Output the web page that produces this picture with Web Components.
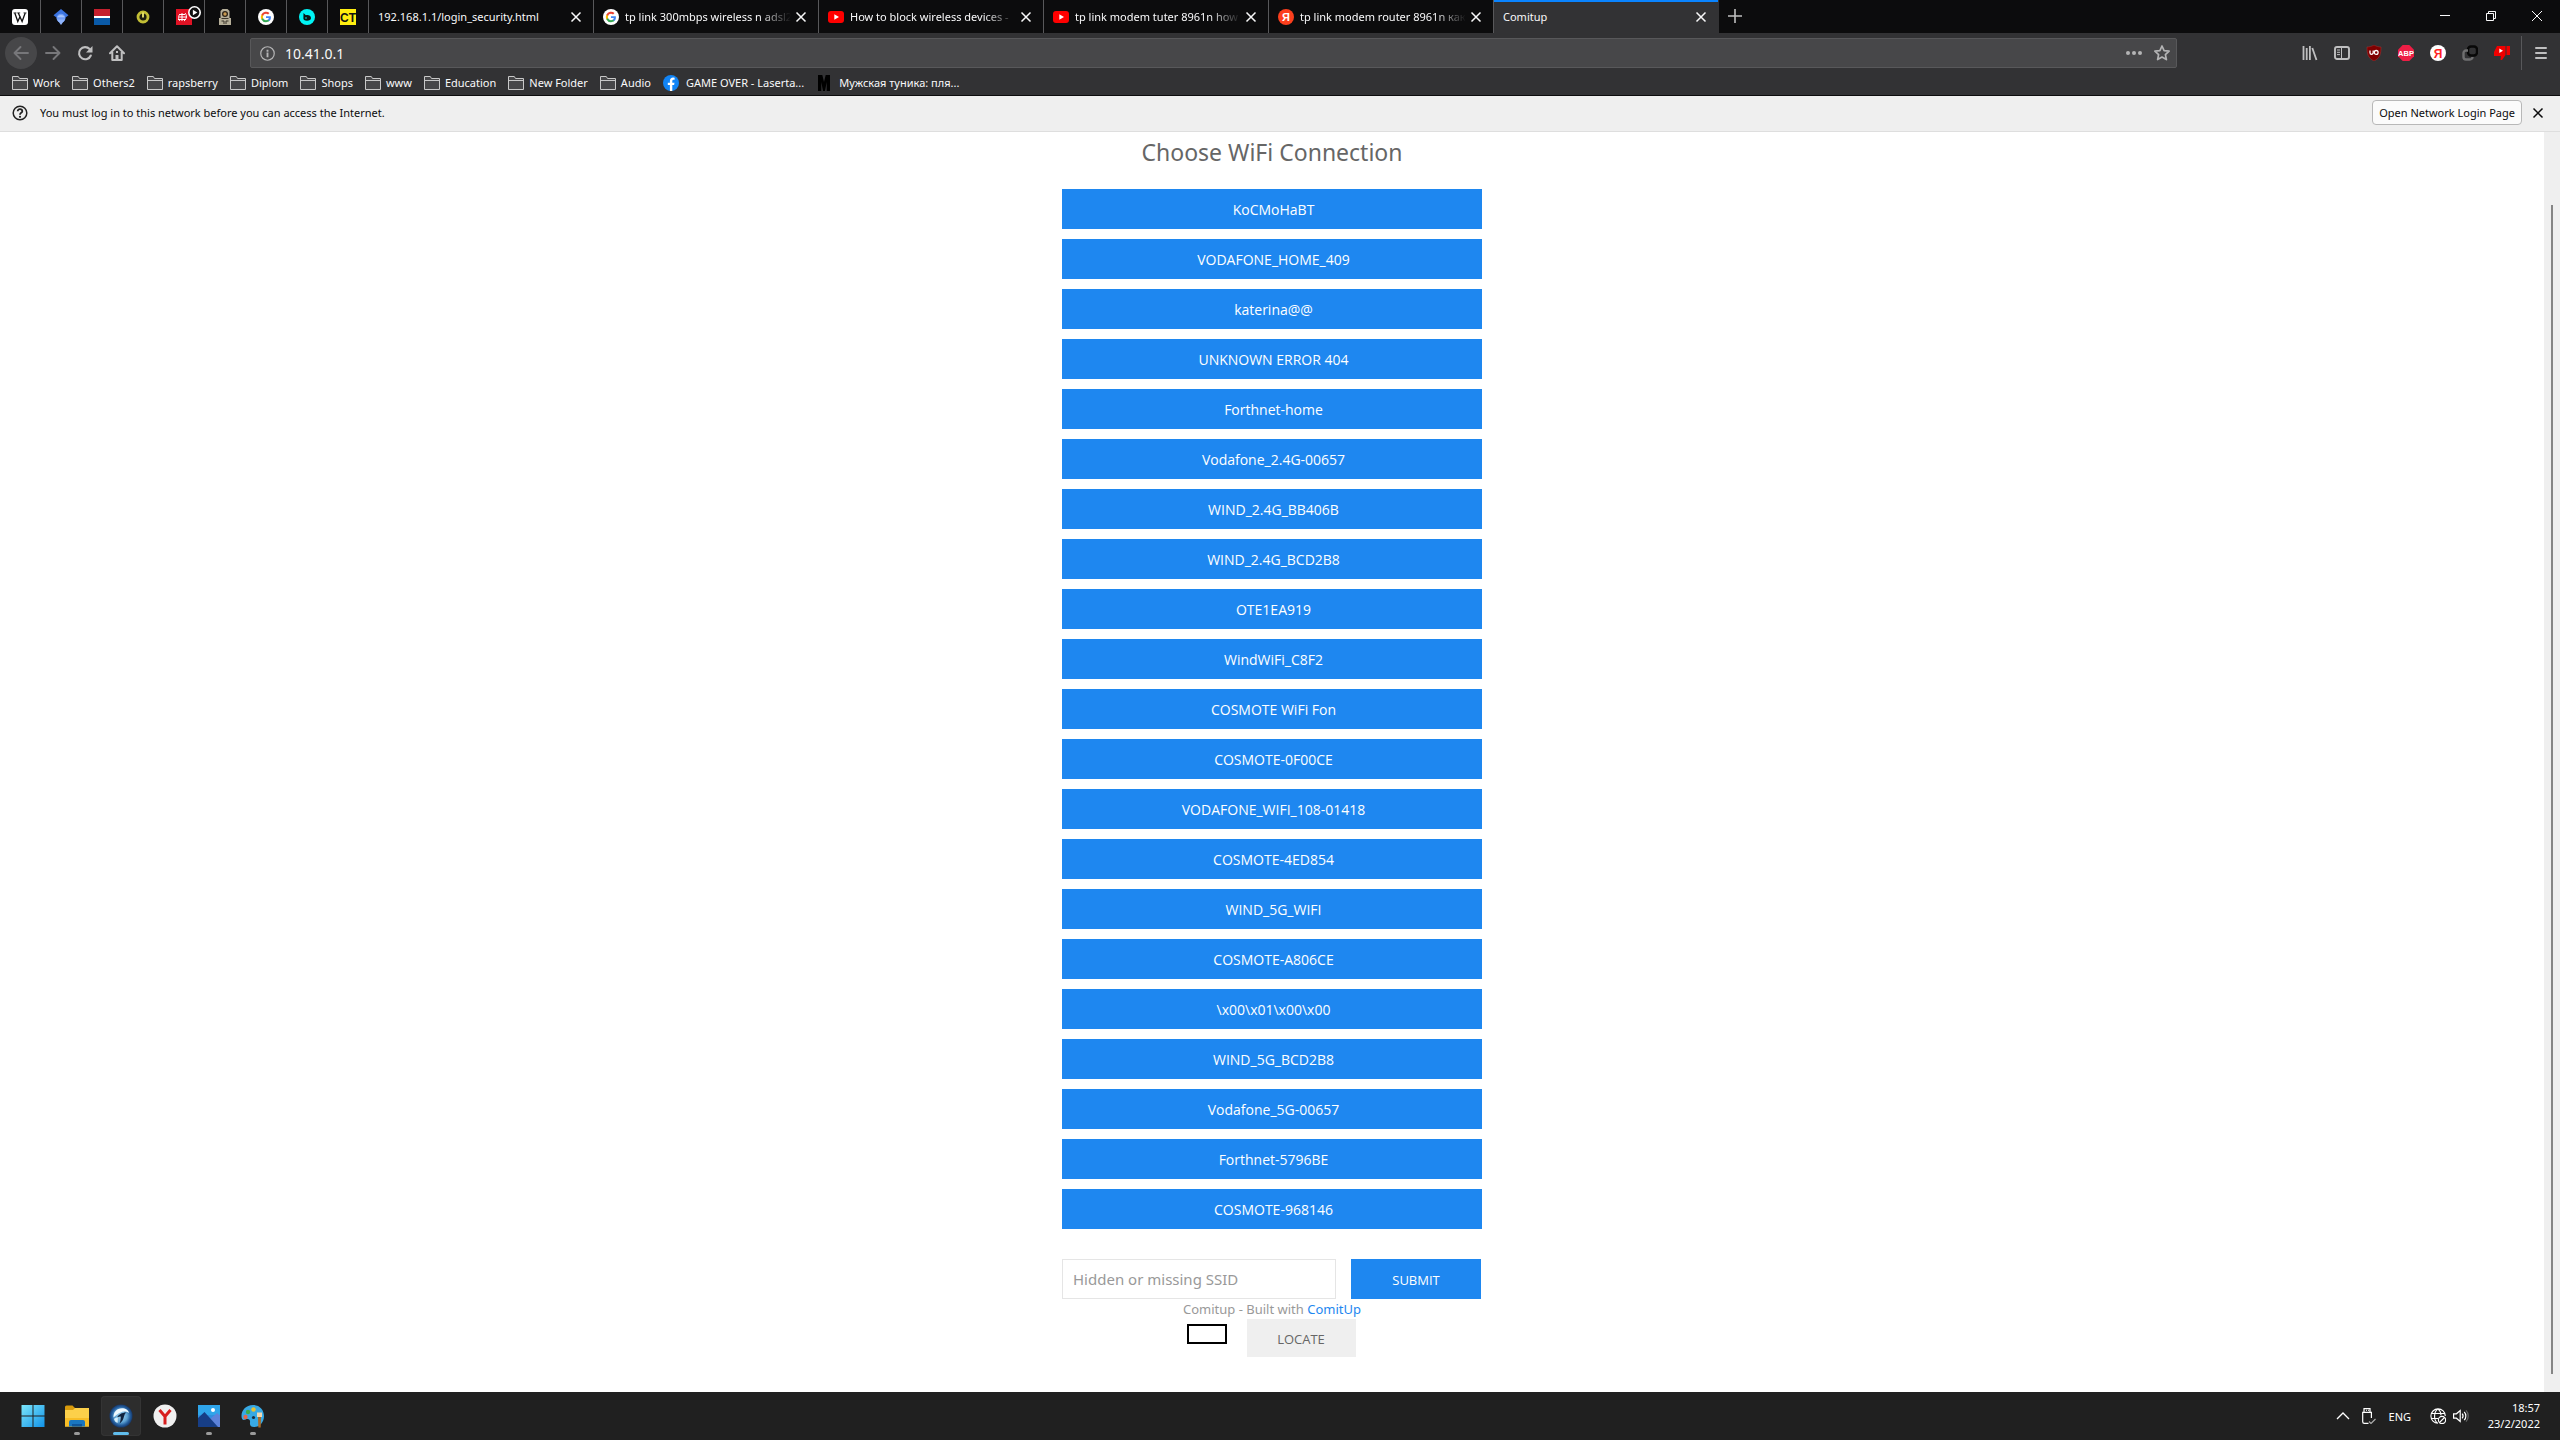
<!DOCTYPE html>
<html lang="en">
<head>
<meta charset="utf-8">
<title>Comitup</title>
<style>
  html, body { margin: 0; height: 100%; }
  body { font-family: "Noto Sans", "Open Sans", sans-serif; font-size: 12px; background: #fff; }
</style>
</head>
<body>
<desktop-screen></desktop-screen>
<script>
const G = '<path fill="#4285f4" d="M12.900 8.200c0-.4 0-.7-.1-1H8v1.900h2.800c-.1.7-.5 1.200-1 1.600v1.300h1.600c1-.9 1.500-2.200 1.500-3.800z"/><path fill="#34a853" d="M8 13.200c1.400 0 2.500-.5 3.400-1.200l-1.600-1.300c-.5.3-1.100.5-1.800.5-1.400 0-2.500-.9-2.900-2.200H3.400v1.400A5.200 5.200 0 0 0 8 13.200z"/><path fill="#fbbc05" d="M5.100 9a3 3 0 0 1 0-2V5.600H3.400a5.200 5.200 0 0 0 0 4.800z"/><path fill="#ea4335" d="M8 4.800c.8 0 1.500.3 2 .8l1.500-1.500A5.200 5.200 0 0 0 3.400 5.600L5.100 7C5.500 5.700 6.600 4.800 8 4.800z"/>';
const ICONS = {
  wiki: '<rect width="16" height="16" rx="3" fill="#fff"/><path fill="none" stroke="#111" stroke-width="1.300" d="M2.800 4l3 8.500L8.300 7M6.300 4l3.800 8.500L13.200 4"/><path stroke="#111" stroke-width=".8" d="M1.500 3.900h3M5.200 3.900h3M11.500 3.900h3"/>',
  scholar: '<path fill="#3b74e0" d="M8 0L.5 6.300 4 9h8l3.500-2.700z"/><circle cx="8" cy="9.200" r="4.400" fill="#6f9df5"/><path fill="#8fb4fc" d="M4 10.500h8L8 16z"/><path fill="#a6c4fd" d="M4.200 8.200a4.400 4.400 0 0 1 7.600 0z"/>',
  flag: '<path fill="#c5202e" d="M0 0h16v7H0z"/><path fill="#fff" d="M0 7h16v2H0z"/><path fill="#0a5aa8" d="M0 9h16v7H0z"/>',
  power: '<circle cx="8" cy="8" r="5" fill="#1c1c10" stroke="#c2be35" stroke-width="2.800"/><path stroke="#f0ec70" stroke-width="1.800" d="M8 3.500v5"/>',
  redtv: '<path fill="#e01224" d="M0 0h16v16H0z"/><path fill="none" stroke="#fff" stroke-width="1" d="M3 5.500h6M3 8h8M2 10.500h8M6 4v8M4 5c-2 2-2 5 0 7M9 4c2 2 2 6-1 8"/>',
  play: '<circle cx="8" cy="8" r="7" fill="#111" stroke="#fff" stroke-width="2"/><path fill="#fff" d="M6 4.500L11.500 8 6 11.500z"/>',
  robot: '<path fill="#b5ae98" d="M3.500 2L5.500 0h5l2 2v7H14v7H2V9h1.500z"/><circle cx="8" cy="5" r="3" fill="#2c2418"/><circle cx="8" cy="5" r="1.700" fill="#c99a50"/><path stroke="#3a352b" d="M4.500 9.500h7M4.500 12h2.500v3M11.500 12H9v3" fill="none"/>',
  google: '<circle cx="8" cy="8" r="8" fill="#fff"/>' + G,
  cyan: '<circle cx="8" cy="8" r="8" fill="#00f4f4"/><path fill="#0a1616" d="M4.500 4l2.400 2.300C9.500 5.500 12 7 12 9c0 1.800-1.500 2.800-4 2.800S4 10.800 4.400 8.800z"/><circle cx="7" cy="9" r=".8" fill="#00f4f4"/>',
  ct: '<path fill="#ffee10" d="M0 0h16v16H0z"/><text x="8" y="12.500" text-anchor="middle" font-family="Liberation Sans" font-weight="700" font-size="12" fill="#111">CT</text>',
  youtube: '<rect y="2" width="16" height="12" rx="3" fill="#f00"/><path fill="#fff" d="M6.300 5.300L11 8l-4.700 2.700z"/>',
  yandex: '<circle cx="8" cy="8" r="8" fill="#fc3f1d"/><text x="8" y="12" text-anchor="middle" font-family="Liberation Sans" font-weight="700" font-size="11" fill="#fff">Я</text>',
  yaext: '<circle cx="8" cy="8" r="8" fill="#fff"/><text x="8" y="12.500" text-anchor="middle" font-family="Liberation Sans" font-weight="700" font-size="12" fill="#f22">Я</text>',
  close: '<path fill="none" stroke="currentColor" stroke-width="1.500" d="M3.500 3.500l9 9M12.500 3.500l-9 9"/>',
  plus: '<path fill="none" stroke="currentColor" stroke-width="1.600" d="M8 1v14M1 8h14"/>',
  min: '<path stroke="currentColor" d="M3 7.500h10"/>',
  restore: '<path fill="none" stroke="currentColor" d="M3.500 5.500h7v7h-7zM5.500 5.500v-2h7v7h-2"/>',
  winclose: '<path fill="none" stroke="currentColor" d="M3 3l10 10M13 3L3 13"/>',
  back: '<path fill="none" stroke="currentColor" stroke-width="1.900" stroke-linecap="round" stroke-linejoin="round" d="M15 8H1.500M7.500 2l-6 6 6 6"/>',
  forward: '<path fill="none" stroke="currentColor" stroke-width="1.900" stroke-linecap="round" stroke-linejoin="round" d="M1 8h13.500M8.500 2l6 6-6 6"/>',
  reload: '<path fill="none" stroke="currentColor" stroke-width="2.100" stroke-linecap="round" d="M13.800 10.500A6.100 6.100 0 1 1 12.600 4"/><path fill="currentColor" d="M15.500 1v6.500H9z"/>',
  home: '<path fill="none" stroke="currentColor" stroke-width="2" stroke-linejoin="round" stroke-linecap="round" d="M1 8.300L8 1.300l7 7M3.300 7v8h9.400V7"/><path fill="currentColor" d="M6.500 10h3v5h-3zM7 6h2v2H7z"/>',
  info: '<circle cx="8" cy="8" r="7.200" fill="none" stroke="currentColor" stroke-width="1.300"/><path fill="currentColor" d="M7 7h2v5H7zM7 4h2v2H7z"/>',
  dots: '<g fill="currentColor"><circle cx="2" cy="8" r="2"/><circle cx="8" cy="8" r="2"/><circle cx="14" cy="8" r="2"/></g>',
  star: '<path fill="none" stroke="currentColor" stroke-width="1.700" stroke-linejoin="round" d="M8 1l2.100 4.600 5 .6-3.700 3.400 1 5L8 12.100l-4.400 2.500 1-5L.9 6.200l5-.6z"/>',
  library: '<path fill="none" stroke="currentColor" stroke-width="1.800" d="M1.500 1v14M4.700 3v12M7.900 1v14M10.300 3l4.200 12"/>',
  sidebar: '<rect x="1" y="2" width="14" height="12" rx="2" fill="none" stroke="currentColor" stroke-width="1.900"/><path stroke="currentColor" stroke-width="1" d="M7.500 2v12M3 5h3M3 7.300h3M3 9.600h3"/>',
  ublock: '<path fill="#800000" stroke="#a33" stroke-width=".5" d="M8 0c2.500 1.500 5 2 7 2 0 7-1 11-7 14C2 13 1 9 1 2c2 0 4.500-.5 7-2z"/><path fill="none" stroke="#fff" stroke-width="1.300" d="M4 5.500v2.200a1.600 1.600 0 0 0 3.200 0V5.500"/><circle cx="10.200" cy="7.400" r="1.900" fill="none" stroke="#fff" stroke-width="1.300"/>',
  abp: '<path fill="#ed1e45" d="M4.700 0h6.600L16 4.700v6.600L11.300 16H4.700L0 11.300V4.700z"/><text x="8" y="10.700" text-anchor="middle" font-family="Liberation Sans" font-weight="700" font-size="7.500" fill="#fff">ABP</text>',
  links: '<rect x="6" y="1.500" width="9" height="9" rx="3" fill="none" stroke="#080808" stroke-width="2.400"/><path fill="none" stroke="#6f6f70" stroke-width="2.400" d="M6 5.500H4a2.500 2.500 0 0 0-2.500 2.500v4A2.500 2.500 0 0 0 4 14.500h4a2.500 2.500 0 0 0 2.500-2.500"/>',
  dislike: '<path fill="#f00000" d="M3 1h8.500v9L8 15H6.500l.4-4H0V7zM12.500 1H16v9h-3.500z"/><path fill="#fff" d="M5.300 3.500L9 5.700 5.300 8z"/>',
  menu: '<path stroke="currentColor" stroke-width="2" stroke-linecap="round" d="M3 3h10M3 8h10M3 13h10"/>',
  folder: '<path fill="#474749" stroke="#c8c8c8" d="M.5 14V1.500h5.800l1.200 2h8V14.500H.5zM.5 5.500h15"/>',
  facebook: '<circle cx="8" cy="8" r="8" fill="#1184f5"/><path fill="#fff" d="M6.900 16V10H4.800V7.700h2.100V6c0-2.200 1.200-3.400 3.200-3.400l1.500.1v2h-1c-1 0-1.300.6-1.300 1.300v1.700h2.200L11.100 10H9.300v6z"/>',
  m: '<path fill="#000" d="M2 0h4.300L8 7l1.700-7H14v16h-3.300V7L9 16H7L5.300 7v9H2z"/>',
  help: '<circle cx="8" cy="8" r="6.800" fill="none" stroke="#222" stroke-width="1.500"/><path fill="none" stroke="#222" stroke-width="1.800" d="M5.700 6.300C5.700 3.300 10.300 3.500 10.300 6.200 10.300 8 8 7.600 8 9.700"/><circle cx="8" cy="11.800" r="1.100" fill="#222"/>',
  start: '<defs><linearGradient id="w" x2="1" y2="1"><stop stop-color="#7ce7fb"/><stop offset="1" stop-color="#1192e8"/></linearGradient></defs><path fill="url(#w)" d="M.5 1h11v10.500H.5zM12.500 1h11v10.500h-11zM.5 12.500h11V23H.5zM12.500 12.500h11V23h-11z"/>',
  explorer: '<path fill="#d99b0c" d="M0 3a1.500 1.500 0 0 1 1.500-1.500h6L10 4v4H0z"/><path fill="#fcd04a" d="M0 6h8l2-2h14v18.500H0z"/><path fill="#f7bd26" d="M0 14h24v8.500H0z"/><path fill="#1976c0" d="M4 22.500V18a2 2 0 0 1 2-2h12a2 2 0 0 1 2 2v4.500z"/><path fill="#0f569b" d="M7 20h10v2.500H7z"/>',
  waterfox: '<defs><radialGradient id="f" cx=".5" cy=".5" r=".5"><stop stop-color="#a9daf4"/><stop offset=".55" stop-color="#5fa3d4"/><stop offset=".8" stop-color="#255f9e"/><stop offset="1" stop-color="#15386c"/></radialGradient></defs><circle cx="12" cy="12" r="11.500" fill="url(#f)"/><path fill="#eef9ff" d="M4.500 13.500C4 7.500 9 3 15.500 4.500c2.500.6 4 2.300 4.500 4.500-3-2-6-1.800-8.500-.5-3 1.300-4.500 3-7 5z"/><path fill="#10233f" d="M8 13.500c1.500-2.700 4.500-5 9.500-5-2.500 1.500-2 4-3.500 7-.8 1.600-2 3-3.500 4 1-2.500 1.300-4.500 1.200-7-1.200 0-2.400.3-3.700 1z"/><path fill="#d5effc" d="M5 15c1-1 2.500-1.500 4-1.500-.5 2 0 3.500-.5 5.500C6.500 18 5.500 17 5 15z"/>',
  yabrowser: '<circle cx="12" cy="12" r="11.500" fill="#f0f0f0"/><path fill="none" stroke="#d81f1f" stroke-width="3" d="M6.500 6L12 12.500 17.500 6M12 12v8.500"/>',
  photos: '<path fill="#2f8fe0" d="M1 1h22v22H1z"/><path fill="#2fa5ea" d="M1 1h22v10H1z"/><path fill="#5d83da" d="M13 15l7-6 3 2.500V23H13z"/><path fill="#173e86" d="M1 14l6.500-6L21 23H1z"/><circle cx="16" cy="6" r="2" fill="#fff"/>',
  paint: '<path fill="#38a9e4" d="M12 1C5 1 .5 6 .5 12c0 4 2 4.500 4 3.500 3-1.300 5 0 4.500 3-.4 3 1 4.500 4 4.500 6 0 10-5 10-11S18.500 1 12 1z"/><circle cx="4.500" cy="13" r="2.200" fill="#e2694b"/><circle cx="7" cy="8" r="2.200" fill="#40ad4c"/><circle cx="12.500" cy="5.500" r="2.200" fill="#e6c335"/><circle cx="12.500" cy="13.500" r="1.600" fill="#1c2c3c"/><path fill="#f1d9b3" d="M16 8.500h5V13h-5z"/><path fill="#a86a28" d="M17 13h3l-.3 10.500h-2.400z"/>',
  up: '<path fill="none" stroke="currentColor" stroke-width="1.300" d="M2 11l6-6 6 6"/>',
  usb: '<path fill="none" stroke="currentColor" stroke-width="1.200" d="M4 4V.6h6V4M8.500 15.400H4.400a1.700 1.700 0 0 1-1.700-1.700V4.300h8.700V10M6 2.300h.8M8 2.300h.8"/><path fill="none" stroke="#aaa" stroke-width="1.200" d="M9 13.500l2 2 4.500-4.500"/>',
  globe: '<g fill="none" stroke="currentColor" stroke-width="1.100"><path d="M8 15.300A7.200 7.200 0 1 1 15.300 8M.9 5.500h14.200M.9 10.500H8M8 .8C3.500 4 3.500 12 7.500 15.200M8 .8c2 1.700 3 4 3 6.500"/><circle cx="12" cy="12" r="3.600"/><path d="M9.500 14.500l5-5"/></g>',
  speaker: '<g fill="none" stroke="currentColor" stroke-width="1.200"><path d="M.6 5.800h2.800L7.200 2.500v11L3.400 10.200H.6z"/><path d="M9.200 5.700c1 1.300 1 3.300 0 4.600M11.200 3.800c2.200 2.200 2.200 6.200 0 8.400"/><path stroke="#666" d="M13 2.300c3 3 3 8.400 0 11.400"/></g>'
};

class Base extends HTMLElement {
  connectedCallback() {
    if (this.shadowRoot) return;
    this.attachShadow({ mode: 'open' }).innerHTML =
      '<style>:host{box-sizing:border-box}*{box-sizing:border-box}button,input{font:inherit;color:inherit;margin:0;padding:0;border:0;background:none}' +
      this.css() + '</style>' + this.html();
  }
  css() { return ''; }
  html() { return '<slot></slot>'; }
  a(n) { return this.getAttribute(n); }
}

/* <ui-icon name size> draws one glyph of the ICONS table */
customElements.define('ui-icon', class extends Base {
  css() { return ':host{display:block;flex:none}svg{display:block}'; }
  html() {
    const big = ['start', 'explorer', 'waterfox', 'yabrowser', 'photos', 'paint'].includes(this.a('name'));
    const s = this.a('size') || (big ? 24 : 16), v = big ? 24 : 16;
    return `<svg width="${s}" height="${s}" viewBox="0 0 ${v} ${v}" aria-hidden="true">${ICONS[this.a('name')]}</svg>`;
  }
});

customElements.define('icon-button', class extends Base {
  css() {
    return `:host{display:flex;flex:none;width:32px;height:32px}
      button{flex:1;display:flex;align-items:center;justify-content:center}
      :host([round]) button{background:#474749;border-radius:50%}`;
  }
  html() { return `<button aria-label="${this.a('label')}"><ui-icon name="${this.a('name')}" size="${this.a('size') || 16}"></ui-icon></button>`; }
});

customElements.define('pinned-tab', class extends Base {
  css() {
    return `:host{display:flex;width:41px;flex:none;border-right:1px solid #58585a}
      button{flex:1;display:flex;align-items:center;justify-content:center;position:relative}
      .badge{position:absolute;left:24px;top:6px}`;
  }
  html() {
    return `<button aria-label="${this.a('label')}"><ui-icon name="${this.a('name')}"></ui-icon>` +
      (this.hasAttribute('playing') ? '<ui-icon class="badge" name="play" size="13"></ui-icon>' : '') + '</button>';
  }
});

customElements.define('browser-tab', class extends Base {
  css() {
    return `:host{display:flex;width:225px;flex:none;border-right:1px solid #58585a;align-items:center;padding:0 7px 0 9px;color:#f9f9fa}
      :host([active]){background:#323234;border-right-color:#323234;box-shadow:inset 0 2px #0a84ff}
      .pick{flex:1;min-width:0;display:flex;align-items:center;gap:6px;text-align:left}
      .label{flex:1;overflow:hidden;white-space:nowrap;line-height:18px}
      :host([fade]) .label{-webkit-mask-image:linear-gradient(to left,transparent,#000 32px);mask-image:linear-gradient(to left,transparent,#000 32px)}
      icon-button{width:20px;height:20px}`;
  }
  html() {
    const i = this.a('icon');
    return `<button class="pick">${i ? `<ui-icon name="${i}"></ui-icon>` : ''}<span class="label"><slot></slot></span></button>
      <icon-button name="close" label="Close tab"></icon-button>`;
  }
});

customElements.define('tab-strip', class extends Base {
  css() { return `:host{display:flex;height:33px;background:#0c0c0d;color:#f9f9fa;font-size:11px}
    .new{width:32px;color:#bebebf}.grow{flex:1}.win{width:46px}`; }
  html() {
    const pins = ['wiki', 'scholar', 'flag', 'power', 'redtv', 'robot', 'google', 'cyan', 'ct'];
    return pins.map(p => `<pinned-tab name="${p}" label="${p}" ${p === 'redtv' ? 'playing' : ''}></pinned-tab>`).join('') + `
      <browser-tab>192.168.1.1/login_security.html</browser-tab>
      <browser-tab icon="google" fade>tp link 300mbps wireless n adsl2</browser-tab>
      <browser-tab icon="youtube" fade>How to block wireless devices -</browser-tab>
      <browser-tab icon="youtube" fade>tp link modem tuter 8961n how</browser-tab>
      <browser-tab icon="yandex" fade>tp link modem router 8961n как</browser-tab>
      <browser-tab active>Comitup</browser-tab>
      <icon-button class="new" name="plus" label="New tab"></icon-button>
      <span class="grow"></span>
      <icon-button class="win" name="min" label="Minimize"></icon-button>
      <icon-button class="win" name="restore" label="Restore"></icon-button>
      <icon-button class="win" name="winclose" label="Close"></icon-button>`;
  }
});

customElements.define('nav-bar', class extends Base {
  css() {
    return `:host{display:flex;align-items:center;height:40px;padding:0 3px 0 5px;background:#323234;color:#bfbfc0}
      .off{color:#77777a}
      .url{flex:1;display:flex;align-items:center;height:30px;margin:0 117px;border:1px solid #58585a;border-radius:2px;background:#474749;padding:0 5px 0 9px;gap:10px;color:#b4b4b5}
      .url icon-button{width:18px;height:28px}
      input{flex:1;min-width:0;font-size:14px;color:#f9f9fa;outline:0;height:28px}
      .rule{width:1px;height:34px;background:#58585a;margin:0 3px}`;
  }
  html() {
    const ext = ['library', 'sidebar', 'ublock', 'abp', 'yaext', 'links', 'dislike'];
    return `<icon-button class="off" round name="back" label="Back"></icon-button>
      <icon-button class="off" name="forward" label="Forward"></icon-button>
      <icon-button name="reload" label="Reload"></icon-button>
      <icon-button name="home" label="Home"></icon-button>
      <div class="url"><ui-icon name="info" size="15"></ui-icon><input aria-label="Address" value="10.41.0.1">
        <icon-button name="dots" label="Page actions"></icon-button><icon-button name="star" label="Bookmark"></icon-button></div>` +
      ext.map(e => `<icon-button name="${e}" label="${e}"></icon-button>`).join('') +
      `<span class="rule"></span><icon-button name="menu" label="Menu"></icon-button>`;
  }
});

customElements.define('bookmark-item', class extends Base {
  css() { return `:host{display:block;flex:none}a{display:flex;align-items:center;gap:5px;color:#f9f9fa;text-decoration:none;line-height:18px;white-space:nowrap}
    :host([wide]) a{gap:7px}`; }
  html() { return `<a href="#"><ui-icon name="${this.a('icon') || 'folder'}"></ui-icon><slot></slot></a>`; }
});

customElements.define('bookmark-bar', class extends Base {
  css() { return ':host{display:flex;align-items:center;gap:12px;height:23px;padding:0 12px 3px;background:#323234;border-bottom:1px solid #0c0c0d;font-size:11px}'; }
  html() {
    return ['Work', 'Others2', 'rapsberry', 'Diplom', 'Shops', 'www', 'Education', 'New Folder', 'Audio'].map(t => `<bookmark-item>${t}</bookmark-item>`).join('') +
      '<bookmark-item wide icon="facebook">GAME OVER - Laserta...</bookmark-item><bookmark-item wide icon="m">Мужская туника: пля...</bookmark-item>';
  }
});

customElements.define('notice-bar', class extends Base {
  css() {
    return `:host{display:flex;align-items:center;height:36px;padding:0 6px 2px 12px;background:#efefef;border-bottom:1px solid #dedede;color:#0c0c0d;font-size:11px}
      .msg{flex:1;padding-left:12px}
      .open{height:25px;padding:0 6px;border:1px solid #b8b8b8;border-radius:4px;background:#fbfbfb}`;
  }
  html() { return `<ui-icon name="help"></ui-icon><span class="msg"><slot></slot></span><button class="open">Open Network Login Page</button><icon-button name="close" label="Dismiss"></icon-button>`; }
});

customElements.define('wifi-button', class extends Base {
  css() {
    return `:host{display:flex;height:40px}
      button{flex:1;background:#1e87f0;color:#fff;font-family:"Open Sans","Noto Sans",sans-serif;font-size:14px;line-height:20px;padding:2px 27px 0 30px}
      :host([plain]){height:38px}
      :host([plain]) button{background:#efefef;color:#666}
      :host([small]) button{font-size:13px;padding:2px 0 0}`;
  }
  html() { return '<button><slot></slot></button>'; }
});

customElements.define('wifi-page', class extends Base {
  css() {
    return `:host{flex:1;min-height:0;display:flex;background:#fff}
      main{flex:1;display:flex;flex-direction:column;align-items:center;padding-top:4px}
      h1{margin:0 0 21px;font-weight:400;font-size:23px;line-height:32px;color:#666}
      .list{display:flex;flex-direction:column;gap:10px;width:420px}
      form{display:flex;gap:15px;width:420px;margin-top:30px;padding-right:1px}
      input{flex:1;min-width:0;height:40px;border:1px solid #e5e5e5;padding:0 10px;font-size:15px;color:#666}
      input::placeholder{color:#999;opacity:1}
      form wifi-button{width:130px}
      p{margin:0;font-size:13px;line-height:20px;color:#999}
      a{color:#1e87f0;text-decoration:none}
      .foot{display:flex;gap:20px;padding-right:2px}
      .lamp{width:40px;height:20px;border:2px solid #000;margin-top:5px}
      .foot wifi-button{width:109px}
      .bar{width:16px;background:#efefef;display:flex;justify-content:center;padding:73px 0 18px}
      .bar i{width:2px;background:#858585}`;
  }
  html() {
    const nets = ['KoCMoHaBT', 'VODAFONE_HOME_409', 'katerina@@', 'UNKNOWN ERROR 404', 'Forthnet-home', 'Vodafone_2.4G-00657', 'WIND_2.4G_BB406B', 'WIND_2.4G_BCD2B8', 'OTE1EA919', 'WindWiFi_C8F2', 'COSMOTE WiFi Fon', 'COSMOTE-0F00CE', 'VODAFONE_WIFI_108-01418', 'COSMOTE-4ED854', 'WIND_5G_WIFI', 'COSMOTE-A806CE', '\\x00\\x01\\x00\\x00', 'WIND_5G_BCD2B8', 'Vodafone_5G-00657', 'Forthnet-5796BE', 'COSMOTE-968146'];
    return `<main><h1>Choose WiFi Connection</h1>
      <div class="list">${nets.map(n => `<wifi-button>${n}</wifi-button>`).join('')}</div>
      <form><input aria-label="Hidden or missing SSID" placeholder="Hidden or missing SSID"><wifi-button small>SUBMIT</wifi-button></form>
      <p>Comitup - Built with <a href="#">ComitUp</a></p>
      <div class="foot"><span class="lamp"></span><wifi-button plain small>LOCATE</wifi-button></div></main>
      <div class="bar"><i></i></div>`;
  }
});

customElements.define('task-button', class extends Base {
  css() {
    return `:host{display:block;width:40px;height:40px;flex:none}
      button{width:40px;height:40px;display:flex;flex-direction:column;align-items:center;padding-top:8px;gap:4px;border-radius:4px}
      i{width:6px;height:3px;border-radius:2px}
      :host([open]) i{background:#9a9a9a}
      :host([active]) button{background:#2d2d2d;box-shadow:inset 0 0 0 1px #343434}
      :host([active]) i{width:16px;background:#60bdec}`;
  }
  html() { return `<button aria-label="${this.a('name')}"><ui-icon name="${this.a('name')}"></ui-icon><i></i></button>`; }
});

customElements.define('task-bar', class extends Base {
  css() {
    return `:host{display:flex;align-items:center;height:48px;background:#202020;color:#fff;padding:0 20px 0 12px;font-size:11px}
      .apps{display:flex;gap:4px;flex:1;padding-left:1px}
      .tray{display:flex;align-items:center}
      .lang{padding:0 19px 0 13px}
      .pair{display:flex;gap:7px}
      .usb{padding-left:9px}
      time{text-align:right;line-height:16px;width:71px}`;
  }
  html() {
    return `<div class="apps"><task-button name="start"></task-button><task-button open name="explorer"></task-button><task-button active name="waterfox"></task-button><task-button name="yabrowser"></task-button><task-button open name="photos"></task-button><task-button open name="paint"></task-button></div>
      <div class="tray"><ui-icon name="up"></ui-icon><ui-icon class="usb" name="usb"></ui-icon><span class="lang">ENG</span>
      <div class="pair"><ui-icon name="globe"></ui-icon><ui-icon name="speaker"></ui-icon></div><time>18:57<br>23/2/2022</time></div>`;
  }
});

customElements.define('desktop-screen', class extends Base {
  css() { return ':host{display:flex;flex-direction:column;min-height:100vh}wifi-page{flex:1}'; }
  html() {
    return `<tab-strip></tab-strip><nav-bar></nav-bar><bookmark-bar></bookmark-bar>
      <notice-bar>You must log in to this network before you can access the Internet.</notice-bar>
      <wifi-page></wifi-page><task-bar></task-bar>`;
  }
});
</script>
</body>
</html>
